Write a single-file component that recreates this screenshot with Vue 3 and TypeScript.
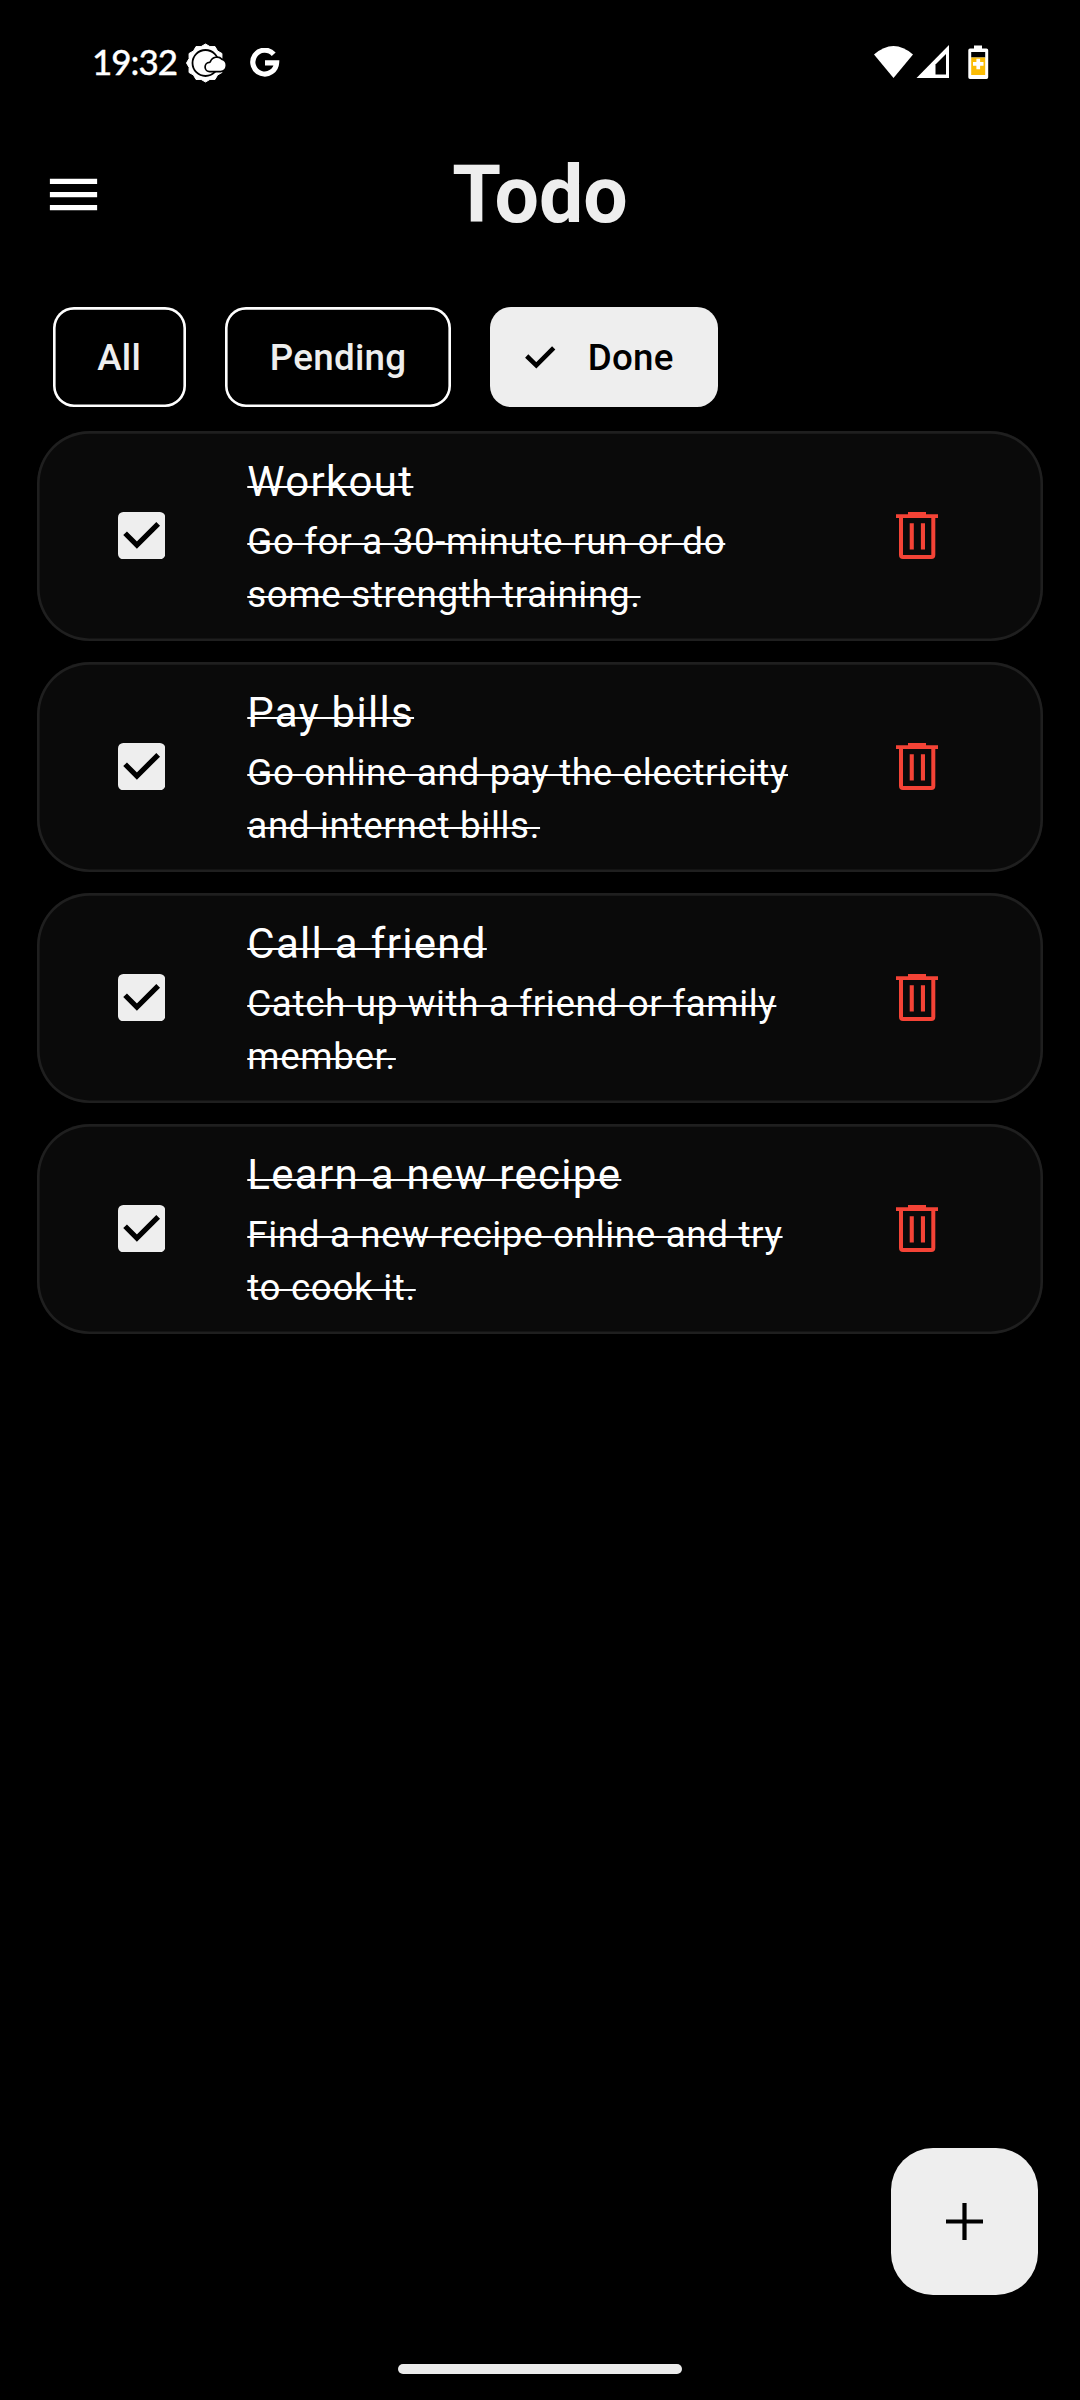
<script setup lang="ts">
interface Task {
  title: string
  note: string
}

const tasks: Task[] = [
  { title: 'Workout', note: 'Go for a 30-minute run or do some strength training.' },
  { title: 'Pay bills', note: 'Go online and pay the electricity and internet bills.' },
  { title: 'Call a friend', note: 'Catch up with a friend or family member.' },
  { title: 'Learn a new recipe', note: 'Find a new recipe online and try to cook it.' },
]

const filters: string[] = ['All', 'Pending', 'Done']
const active = 'Done'

// scalloped rim of the weather badge
const rim: string = Array.from({ length: 24 }, (_, i) => {
  const r = i % 2 === 0 ? 19 : 17
  const a = (i * Math.PI) / 12 - Math.PI / 2
  return `${(19.5 + r * Math.cos(a)).toFixed(2)},${(20 + r * Math.sin(a)).toFixed(2)}`
}).join(' ')

const cloud = 'M23.8 27.700a3.700 3.700 0 0 1-.3-7.400 2.500 2.500 0 0 0 1.700-1.500 6.200 6.200 0 0 1 10.200-1.900 5.500 5.500 0 0 1-.900 10.800z'
</script>

<template>
  <div class="screen">
    <header class="status">
      <span class="clock">19:32</span>
      <svg class="weather" width="41" height="40" viewBox="0 0 41 40">
        <polygon :points="rim" fill="#fff" stroke="#fff" stroke-width="1" stroke-linejoin="round" />
        <circle cx="19.500" cy="20" r="13" fill="#fff" stroke="#000" stroke-width="1.800" />
        <path :d="cloud" fill="#fff" stroke="#000" stroke-width="3.400" />
        <path :d="cloud" fill="#fff" />
      </svg>
      <svg class="google" width="30" height="30" viewBox="0 0 30 30">
        <path d="M23.700 6.300A11.900 11.900 0 1 0 26.600 14.800H15" fill="none" stroke="#fff" stroke-width="5.200" />
      </svg>
      <span class="spring"></span>
      <svg class="radios" width="118" height="36" viewBox="0 0 118 36">
        <path d="M0 9.500Q19.500-7.500 39 9.500L19.500 33z" fill="#fff" />
        <path d="M75 0V33H42.500z" fill="#fff" />
        <path d="M72 9V29.500H61.500V19.500z" fill="#000" />
        <path d="M100 0.500h8v3h4.500a1.700 1.700 0 0 1 1.700 1.700v27a1.700 1.700 0 0 1-1.700 1.700H96a1.700 1.700 0 0 1-1.700-1.700v-27A1.700 1.700 0 0 1 96 3.500h4z" fill="#fff" />
        <path d="M97.200 7h14v5.500h-14z" fill="#000" />
        <path d="M97.200 12.500h14V30h-14z" fill="#fbbc04" />
        <path d="M102.400 13.700h3.700v3.400h3.400v3.600h-3.400v3.500h-3.700v-3.500h-3.400v-3.600h3.400z" fill="#fff" />
      </svg>
    </header>

    <div class="appbar">
      <svg class="menu" width="63" height="63" viewBox="0 0 24 24">
        <path d="M3 18h18v-2H3v2zm0-5h18v-2H3v2zm0-7v2h18V6H3z" fill="#fff" />
      </svg>
      <h1>Todo</h1>
    </div>

    <nav class="chips">
      <button v-for="f in filters" :key="f" class="chip" :class="{ on: f === active }">
        <svg v-if="f === active" class="tick" width="34" height="26" viewBox="0 0 34 26">
          <path d="M3.700 12l9.600 9.300L30.700 3.900" fill="none" stroke="#000" stroke-width="4.600" />
        </svg>
        <span>{{ f }}</span>
      </button>
    </nav>

    <main class="list">
      <article v-for="t in tasks" :key="t.title" class="card">
        <svg class="box" width="47.250" height="47.250" viewBox="0 0 18 18">
          <rect width="18" height="18" rx="2" fill="#eee" />
          <path d="M2.700 8.100l4.500 4.500 8.100-8.100" fill="none" stroke="#000" stroke-width="2" />
        </svg>
        <div class="body">
          <h2><span>{{ t.title }}</span></h2>
          <p>{{ t.note }}</p>
        </div>
        <svg class="bin" width="42" height="48" viewBox="0 0 42 48">
          <g fill="#f44336">
            <path d="M12 0h18v2.200h12v3.800H0V2.200h12z" />
            <path d="M13.700 11.300h4.100v26.300h-4.100zM24.900 11.300H29v26.300h-4.100z" />
          </g>
          <path d="M5 5v38q0 2 2 2h28.300q2 0 2-2V5" fill="none" stroke="#f44336" stroke-width="4" />
        </svg>
      </article>
    </main>

    <footer class="bottom">
      <button class="fab">
        <svg width="37" height="37" viewBox="0 0 37 37">
          <path d="M18.500 0v37M0 18.500h37" stroke="#000" stroke-width="4.200" />
        </svg>
      </button>
      <div class="pill"></div>
    </footer>
  </div>
</template>

<style>
body {
  margin: 0;
  background: #000;
}
</style>

<style scoped>
.screen {
  width: 1080px;
  height: 2400px;
  display: flex;
  flex-direction: column;
  background: #000;
  color: #fff;
  font-family: Roboto, sans-serif;
  overflow: hidden;
}
svg {
  display: block;
  flex: none;
}
h1, h2, p {
  margin: 0;
  font-weight: 400;
}
button {
  border: 0;
  padding: 0;
  background: none;
  font: inherit;
  color: inherit;
}
.status {
  height: 124px;
  box-sizing: border-box;
  display: flex;
  align-items: flex-start;
  padding: 42px 88px 0 92px;
}
.clock {
  width: 94px;
  font: 500 35px/38px Lato, sans-serif;
  letter-spacing: -1px;
  -webkit-text-stroke: 0.300px #fff;
  white-space: nowrap;
}
.weather {
  margin-top: 1px;
}
.google {
  margin: 5.500px 0 0 23px;
}
.spring {
  flex: 1;
}
.radios {
  margin: 3px 0 0;
}
.appbar {
  height: 141px;
  display: grid;
  grid-template-columns: 63px 1fr 63px;
  align-items: center;
  padding: 0 42px;
}
.appbar h1 {
  color: #eee;
  font-size: 78.750px;
  line-height: 92px;
  font-weight: 700;
  text-align: center;
}
.chips {
  display: flex;
  gap: 39.375px;
  padding: 42px 52.500px 0;
}
.chip {
  height: 99.750px;
  display: flex;
  align-items: center;
  padding: 1px 44.700px 0;
  box-sizing: border-box;
  border-radius: 21px;
  box-shadow: inset 0 0 0 2.625px #fff;
  color: #eee;
  font-size: 36.750px;
  font-weight: 500;
  letter-spacing: 0.260px;
}
.chip.on {
  background: #eee;
  box-shadow: none;
  color: #000;
  padding-left: 33px;
}
.tick {
  margin-right: 30.300px;
}
.list {
  display: flex;
  flex-direction: column;
  gap: 21px;
  padding: 24px 36.750px 0;
}
.card {
  height: 210px;
  box-sizing: border-box;
  display: flex;
  align-items: center;
  padding: 0 105px 0 81.250px;
  border-radius: 52.500px;
  background: #0a0a0a;
  box-shadow: inset 0 0 0 2.625px #1f1f1f;
}
.body {
  width: 558px;
  align-self: flex-start;
  padding-top: 20.250px;
  margin-left: 82px;
}
.body h2 {
  font-size: 42px;
  line-height: 61px;
  letter-spacing: 1.312px;
}
.body h2 span,
.body p {
  text-decoration: underline;
  text-decoration-skip-ink: none;
}
.body h2 span {
  text-decoration-thickness: 2px;
  text-underline-offset: -10px;
}
.body p {
  margin-top: 3px;
  font-size: 36.750px;
  line-height: 53px;
  letter-spacing: 0.656px;
  text-decoration-thickness: 2px;
  text-underline-offset: -11px;
}
.bin {
  margin-left: auto;
}
.bottom {
  margin-top: auto;
  display: flex;
  flex-direction: column;
}
.fab {
  width: 147px;
  height: 147px;
  margin: 0 42px 69px auto;
  border-radius: 42px;
  background: #eee;
  display: flex;
  align-items: center;
  justify-content: center;
}
.pill {
  width: 284px;
  height: 10px;
  margin: 0 auto 26px;
  border-radius: 5px;
  background: #ebebeb;
}
</style>
